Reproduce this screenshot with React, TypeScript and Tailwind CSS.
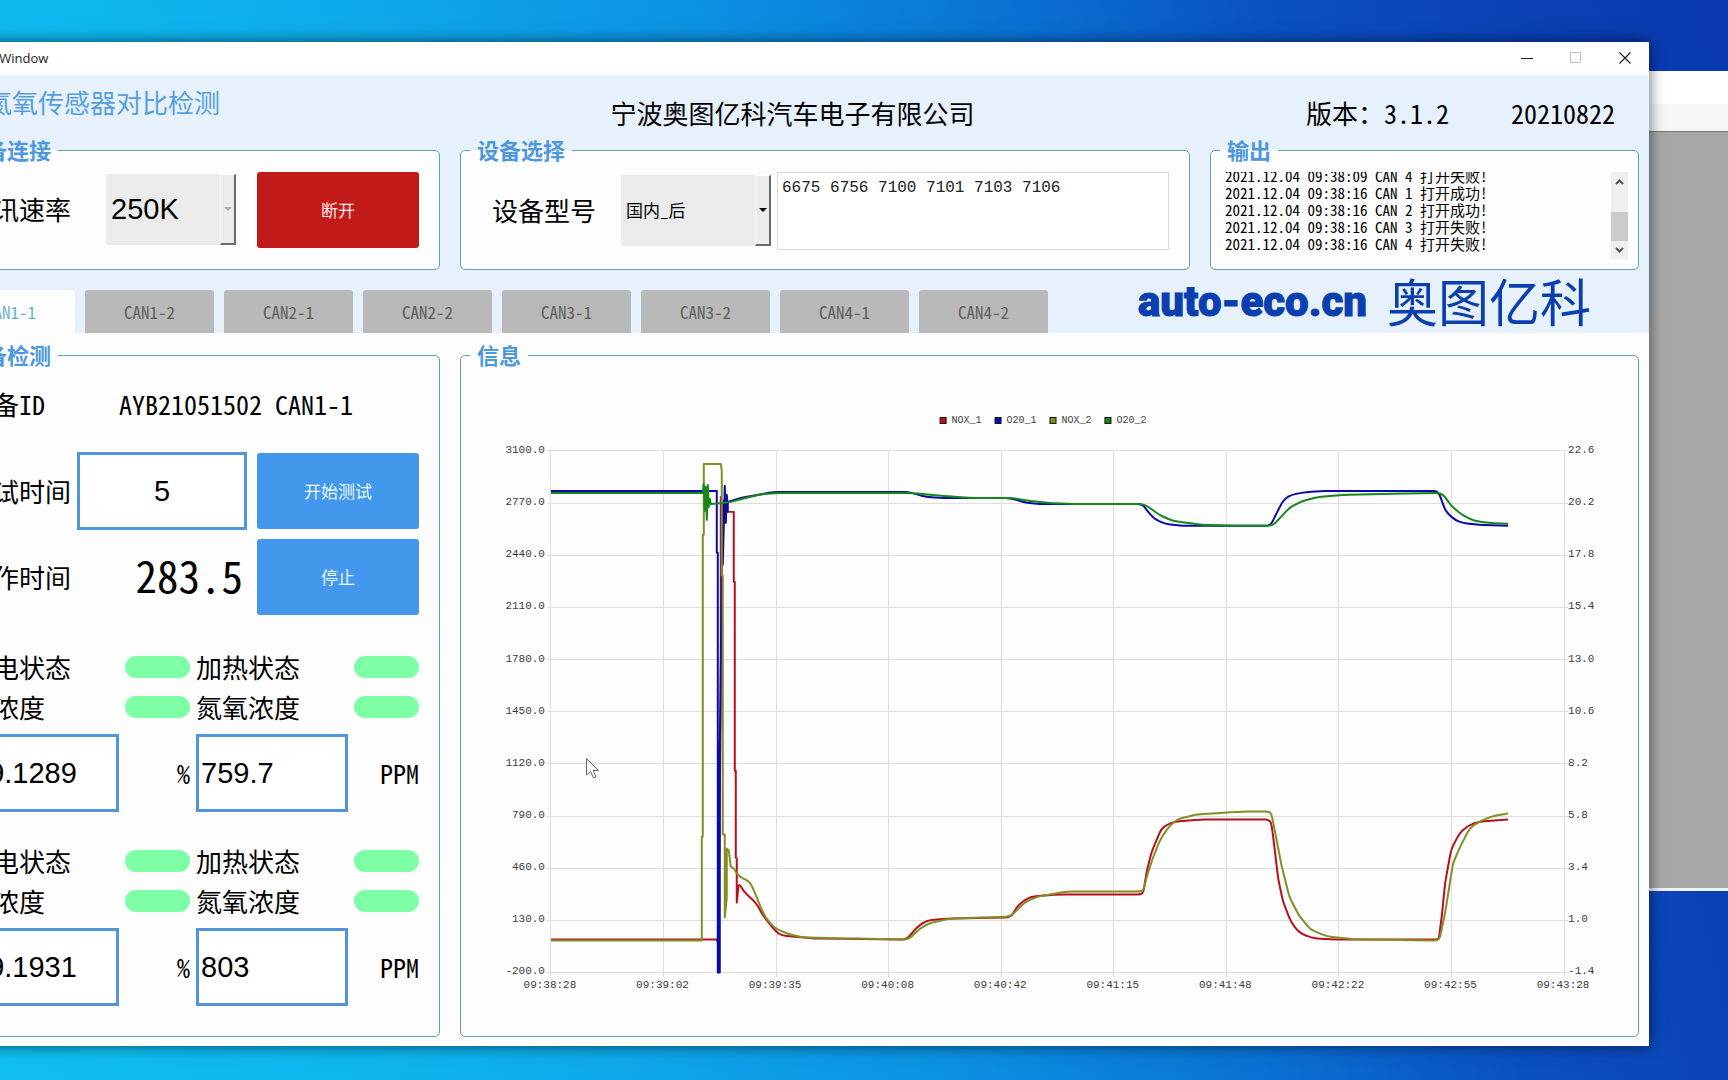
import { useState } from 'react';
import type { ReactNode } from 'react';

type Point = [number, number];

const CAN_TABS = ['CAN1-1', 'CAN1-2', 'CAN2-1', 'CAN2-2', 'CAN3-1', 'CAN3-2', 'CAN4-1', 'CAN4-2'];

const LOG_LINES = [
    '2021.12.04 09:38:09 CAN 4 打开失败!',
    '2021.12.04 09:38:16 CAN 1 打开成功!',
    '2021.12.04 09:38:16 CAN 2 打开成功!',
    '2021.12.04 09:38:16 CAN 3 打开失败!',
    '2021.12.04 09:38:16 CAN 4 打开失败!',
];

const SENSORS = [
    { id: 's1', o2: '19.1289', nox: '759.7' },
    { id: 's2', o2: '19.1931', nox: '803' },
];

// Chart
const PLOT_W = 1014;
const PLOT_H = 522;
const LEFT_AXIS = ['3100.0', '2770.0', '2440.0', '2110.0', '1780.0', '1450.0', '1120.0', '790.0', '460.0', '130.0', '-200.0'];
const RIGHT_AXIS = ['22.6', '20.2', '17.8', '15.4', '13.0', '10.6', '8.2', '5.8', '3.4', '1.0', '-1.4'];
const TIME_AXIS = ['09:38:28', '09:39:02', '09:39:35', '09:40:08', '09:40:42', '09:41:15', '09:41:48', '09:42:22', '09:42:55', '09:43:28'];

const NOX_1: Point[] = [
    [0, 489], [166, 489], [167, 492], [168, 440], [170, 250], [170, 46], [171, 74], [173, 50], [174, 66], [176, 61],
    [183, 61], [183, 131], [184, 131], [184, 320], [185, 320], [185, 407], [186, 408], [186, 452], [188, 432], [193, 441], [205, 452],
    [213, 466], [225, 481], [231, 485], [264, 488], [356, 489], [366, 477], [376, 470], [397, 468], [460, 467],
    [468, 454], [480, 446], [493, 445], [509, 444], [590, 444], [593, 442], [596, 422], [601, 402], [611, 378],
    [617, 374], [624, 371], [650, 369], [720, 369], [722, 379], [728, 429], [733, 452], [741, 472], [748, 481],
    [755, 485], [765, 488], [786, 489], [888, 489], [889, 486], [892, 462], [895, 432], [901, 399], [909, 383],
    [918, 375], [929, 371], [958, 369],
];

const O20_1: Point[] = [
    [0, 40], [166, 40], [166, 102], [167, 102], [167, 522], [169, 522], [169, 300], [171, 125], [171, 52], [173, 60],
    [172, 114], [174, 35], [175, 72], [176, 44], [177, 60], [177, 51], [190, 47], [207, 44], [223, 41], [358, 41],
    [364, 43], [376, 46], [389, 47], [460, 47], [472, 51], [484, 53], [592, 53], [596, 59], [603, 67], [608, 70],
    [615, 73], [632, 75], [720, 75], [724, 67], [732, 51], [736, 47], [741, 44], [756, 41], [780, 40], [888, 40],
    [892, 51], [895, 59], [899, 64], [905, 69], [912, 72], [929, 74], [958, 75],
];

const NOX_2: Point[] = [
    [0, 490], [151, 490], [151, 386], [152, 386], [152, 84], [153, 84], [153, 13], [170, 13], [171, 20], [171, 125],
    [172, 125], [172, 384], [174, 384], [174, 467], [176, 447], [176, 398], [178, 400], [180, 416], [183, 418],
    [188, 426], [199, 431], [204, 442], [213, 464], [223, 477], [236, 483], [252, 487], [301, 488], [358, 489],
    [368, 479], [378, 473], [399, 468], [436, 467], [460, 466], [474, 452], [487, 446], [517, 441], [590, 441],
    [593, 440], [596, 427], [603, 406], [609, 391], [616, 379], [626, 369], [645, 364], [675, 362], [692, 361],
    [720, 361], [722, 367], [731, 414], [739, 446], [748, 464], [760, 479], [777, 486], [807, 489], [888, 490],
    [890, 486], [895, 462], [903, 412], [912, 392], [920, 377], [931, 370], [944, 365], [958, 363],
];

const O20_2: Point[] = [
    [0, 42], [152, 42], [153, 33], [154, 60], [155, 36], [156, 69], [157, 34], [158, 56], [159, 48], [160, 53],
    [172, 52], [180, 51], [192, 48], [207, 44], [225, 42], [358, 42], [372, 43], [393, 45], [419, 47], [460, 47],
    [480, 50], [499, 52], [517, 53], [592, 53], [598, 56], [609, 64], [622, 70], [637, 72], [652, 74], [692, 75],
    [722, 75], [728, 69], [739, 57], [752, 50], [769, 46], [794, 44], [837, 43], [890, 42], [895, 46], [901, 55],
    [912, 64], [924, 70], [939, 72], [958, 73],
];

const SERIES = [
    { name: 'NOX_1', color: '#b80f1f', points: NOX_1 },
    { name: 'O20_1', color: '#0a0aa8', points: O20_1 },
    { name: 'NOX_2', color: '#828f24', points: NOX_2 },
    { name: 'O20_2', color: '#17871b', points: O20_2 },
];

// The start-up spikes stay sharp, corners after them are rounded off
const SPIKES_END = 188;

function toPath(points: Point[]) {
    const toward = ([ax, ay]: Point, [bx, by]: Point) => {
        const len = Math.hypot(bx - ax, by - ay);
        const t = Math.min(0.5, 5 / len);
        return `${(ax + (bx - ax) * t).toFixed(1)} ${(ay + (by - ay) * t).toFixed(1)}`;
    };

    return points
        .map((p, i) => {
            if (i === 0) return `M${p[0]} ${p[1]}`;
            if (p[0] < SPIKES_END || i === points.length - 1) return `L${p[0]} ${p[1]}`;
            return `L${toward(p, points[i - 1])} Q${p[0]} ${p[1]} ${toward(p, points[i + 1])}`;
        })
        .join(' ');
}

function TrendChart() {
    const stepX = PLOT_W / (TIME_AXIS.length - 1);
    const stepY = PLOT_H / (LEFT_AXIS.length - 1);

    return (
        <svg viewBox="0 0 1178 668" className="block w-full font-['Liberation_Mono',monospace] text-[11px]" fill="#3c3c3c">
            {/* Legend */}
            {SERIES.map((s, i) => (
                <g key={s.name} transform={`translate(${479 + i * 55} 50)`}>
                    <rect x="0.5" y="0.5" width="6" height="6" fill={s.color} stroke="#111" />
                    <text x="12" y="6" className="text-[10px]">{s.name}</text>
                </g>
            ))}

            <g transform="translate(90 84)">
                {/* Grid */}
                <g stroke="#dedede" shapeRendering="crispEdges">
                    {LEFT_AXIS.map((label, i) => (
                        <line key={label} x1={-4} x2={PLOT_W + 4} y1={i * stepY} y2={i * stepY} />
                    ))}
                    {TIME_AXIS.map((label, i) => (
                        <line key={label} x1={i * stepX} x2={i * stepX} y1={0} y2={PLOT_H + 5} />
                    ))}
                </g>

                {/* Axis labels */}
                {LEFT_AXIS.map((label, i) => (
                    <text key={label} x={-6} y={i * stepY + 2} textAnchor="end">{label}</text>
                ))}
                {RIGHT_AXIS.map((label, i) => (
                    <text key={label} x={PLOT_W + 4} y={i * stepY + 2}>{label}</text>
                ))}
                {TIME_AXIS.map((label, i) => (
                    <text key={label} x={i * stepX - 1} y={PLOT_H + 16} textAnchor="middle">{label}</text>
                ))}

                {/* Curves */}
                {SERIES.map((s) => (
                    <path key={s.name} d={toPath(s.points)} fill="none" stroke={s.color} strokeWidth="2" strokeLinejoin="round" />
                ))}
            </g>
        </svg>
    );
}

function Panel({ title, className = '', children }: { title: string; className?: string; children: ReactNode }) {
    return (
        <fieldset className={`min-w-0 rounded-[5px] border border-[#5ba3ba] bg-[#fdfdfd] ${className}`}>
            <legend className="ml-[9px] px-[7px] pb-[2px] text-[22px] leading-[22px] font-bold text-[#4d98dd]">{title}</legend>
            {children}
        </fieldset>
    );
}

function ComboBox(props: { id: string; value: string; disabled?: boolean; className: string; arrow: string }) {
    return (
        <div className="relative mb-[2px] h-[71px] bg-[#ebebeb]">
            <select
                id={props.id}
                disabled={props.disabled}
                defaultValue={props.value}
                className={`h-full appearance-none pl-[5px] text-black opacity-100 outline-none ${props.className}`}
            >
                <option>{props.value}</option>
            </select>
            <span className="pointer-events-none absolute inset-y-0 right-0 flex w-4 items-center justify-center border-t border-r-2 border-b-2 border-l border-t-white border-r-[#6b6b6b] border-b-[#6b6b6b] border-l-white bg-[#ececec]">
                <span className={`border-x-4 border-t-4 border-x-transparent ${props.arrow}`} />
            </span>
        </div>
    );
}

function StatusRow({ label }: { label: string }) {
    return (
        <div className="flex h-10 items-center justify-between">
            <span>{label}</span>
            <span className="h-[22px] w-[65px] rounded-full bg-[#7dffa5]" />
        </div>
    );
}

function Reading({ id, name, value, unit }: { id: string; name: string; value: string; unit: string }) {
    return (
        <div className="mt-[7px] flex items-center justify-between">
            <input
                id={id}
                aria-label={name}
                readOnly
                value={value}
                className="h-[78px] w-[152px] border-3 border-[#5096d6] bg-white px-[2px] font-['Liberation_Sans',sans-serif] text-[29px] outline-none"
            />
            <label htmlFor={id}>{unit}</label>
        </div>
    );
}

function TitleBar() {
    return (
        <div className="flex h-[33px] items-center bg-white pb-[2px]">
            <span className="flex-1 pl-[33px] font-['Open_Sans',sans-serif] text-[13px] leading-4 text-[#222]">MainWindow</span>
            <button aria-label="最小化" className="flex h-full w-[49px] items-center justify-center">
                <svg width="12" height="12" stroke="#222"><path d="M0 6.5H12" /></svg>
            </button>
            <button aria-label="最大化" disabled className="flex h-full w-[49px] items-center justify-center">
                <svg width="12" height="12" stroke="#c4c4c4" fill="none"><rect x="0.5" y="0.5" width="10" height="10" /></svg>
            </button>
            <button aria-label="关闭" className="flex h-full w-[49px] items-center justify-center">
                <svg width="12" height="12" stroke="#222" strokeWidth="1.2"><path d="M0.5 0.5L11.5 11.5M11.5 0.5L0.5 11.5" /></svg>
            </button>
        </div>
    );
}

export default function App() {
    const [tab, setTab] = useState('CAN1-1');
    const [testTime, setTestTime] = useState('5');

    return (
        <div className="relative min-h-screen overflow-hidden bg-[linear-gradient(77deg,#10bff2,#0eb6ef_18%,#0da8ea_32%,#0b91e2_48%,#0971d3_64%,#0a50c1_77%,#0a40b4_90%,#0a38b0)] pt-[42px] pb-[34px] font-['Noto_Sans_Mono_CJK_SC','Noto_Sans_CJK_SC',sans-serif] text-[26px] leading-[26px] text-black">
            {/* Window behind */}
            <div className="absolute top-[71px] right-0 flex h-[820px] w-96 flex-col border-b-3 border-[#eef3fb] bg-[#a8a8a8]">
                <div className="h-[33px] bg-white" />
                <div className="h-[28px] border-b border-[#777] bg-[#f6f6f6]" />
            </div>

            {/* Main window, pushed past the left edge of the screen */}
            <div className="relative mr-[79px] -ml-16 bg-[#fdfdfd] shadow-[0_0_14px_rgba(0,0,0,0.6)]">
                <TitleBar />

                <header className="bg-[#e6f1fc]">
                    <div className="grid h-[63px] grid-cols-[1fr_auto_1fr]">
                        <h1 className="pt-[14px] pl-[50px] text-[#559fe0]">氮氧传感器对比检测</h1>
                        <div className="pt-[25px]">宁波奥图亿科汽车电子有限公司</div>
                        <div className="flex justify-end gap-[62px] pt-[25px] pr-[34px]">
                            <span>版本：3.1.2</span>
                            <span>20210822</span>
                        </div>
                    </div>

                    <div className="grid grid-cols-[494px_1fr_429px] gap-5 px-[10px]">
                        <Panel title="设备连接" className="h-[132px]">
                            <div className="flex h-24 items-center px-5">
                                <label htmlFor="baud" className="mr-[35px] pb-[3px]">通讯速率</label>
                                <ComboBox
                                    id="baud"
                                    value="250K"
                                    disabled
                                    className="w-[130px] font-['Liberation_Sans',sans-serif] text-[29px]"
                                    arrow="border-t-[#aaa]"
                                />
                                <button className="ml-auto h-[76px] w-[162px] rounded-[3px] bg-[#c21a19] text-[17px] text-[#ffe9e6]">断开</button>
                            </div>
                        </Panel>

                        <Panel title="设备选择" className="h-[132px]">
                            <div className="flex h-[98px] items-center pr-5 pl-[31px]">
                                <label htmlFor="model" className="mr-[25px] pb-[2px]">设备型号</label>
                                <ComboBox id="model" value="国内_后" className="w-[150px] text-[17px]" arrow="border-t-black" />
                                <textarea
                                    aria-label="型号列表"
                                    readOnly
                                    value="6675 6756 7100 7101 7103 7106"
                                    className="ml-[6px] h-[78px] flex-1 resize-none border border-[#d9d9d9] bg-white px-1 py-[5px] font-['Liberation_Mono',monospace] text-[16px] leading-5 text-[#222] outline-none"
                                />
                            </div>
                        </Panel>

                        <Panel title="输出" className="h-[132px]">
                            <div className="mt-[10px] flex h-[87px] pr-[10px] pl-[14px]">
                                <div role="log" className="flex flex-1 flex-col justify-end overflow-hidden pb-[7px] text-[15px] leading-[17px] font-light">
                                    {LOG_LINES.map((line) => (
                                        <div key={line} className="h-[17px] whitespace-pre">{line}</div>
                                    ))}
                                </div>
                                <div className="flex w-[17px] flex-col items-center bg-[#efefef]">
                                    <button aria-label="向上滚动" className="flex h-5 w-full items-center justify-center">
                                        <svg width="9" height="6" fill="none" stroke="#555" strokeWidth="2"><path d="M1 5L4.5 1.5L8 5" /></svg>
                                    </button>
                                    <div className="mt-5 h-[29px] w-full bg-[#cbcbcb]" />
                                    <button aria-label="向下滚动" className="flex h-[18px] w-full items-center justify-center">
                                        <svg width="9" height="6" fill="none" stroke="#555" strokeWidth="2"><path d="M1 1L4.5 4.5L8 1" /></svg>
                                    </button>
                                </div>
                            </div>
                        </Panel>
                    </div>

                    <div className="flex h-[63px] items-end pl-[10px]">
                        <div role="tablist" className="flex gap-[10px]">
                            {CAN_TABS.map((name) => (
                                <button
                                    key={name}
                                    role="tab"
                                    aria-selected={tab === name}
                                    onClick={() => setTab(name)}
                                    className={`h-[43px] w-[129px] rounded-t-[3px] text-[17px] ${
                                        tab === name ? 'bg-[#fdfdfd] text-[#6db0d6]' : 'bg-[#b9b9b9] text-[#5e5e5e]'
                                    }`}
                                >
                                    {name}
                                </button>
                            ))}
                        </div>
                        <div className="mr-[58px] ml-auto flex h-[63px] items-center gap-5 text-[#0b3fb0]">
                            <span className="font-[Impact,Roboto,sans-serif] text-[42px] font-black [-webkit-text-stroke:1px_#0b3fb0]">auto-eco.cn</span>
                            <span className="pb-1 text-[51px] font-medium">奥图亿科</span>
                        </div>
                    </div>
                </header>

                <main className="grid grid-cols-[494px_1fr] gap-5 px-[10px] pt-[10px] pb-[9px]">
                    <Panel title="设备检测" className="h-[694px]">
                        <div className="px-5">
                            <div className="mb-[11px] flex h-[74px] items-center">
                                <span>设备ID</span>
                                <span className="ml-[74px]">AYB21051502 CAN1-1</span>
                            </div>

                            <div className="flex items-center">
                                <label htmlFor="test-time">测试时间</label>
                                <input
                                    id="test-time"
                                    value={testTime}
                                    onChange={(e) => setTestTime(e.target.value)}
                                    className="ml-[6px] h-[78px] min-w-0 flex-1 border-3 border-[#5096d6] bg-white text-center font-['Liberation_Sans',sans-serif] text-[29px] outline-none"
                                />
                                <button className="ml-[10px] h-[76px] w-[162px] rounded-[3px] bg-[#4398ed] text-[17px] text-[#e6fbff]">开始测试</button>
                            </div>

                            <div className="mt-[9px] flex items-center justify-between">
                                <span>工作时间</span>
                                <span className="mr-[14px] mb-[6px] ml-auto text-[43px] leading-[43px] font-light">283.5</span>
                                <button className="h-[76px] w-[162px] rounded-[3px] bg-[#4398ed] text-[17px] text-[#e6fbff]">停止</button>
                            </div>

                            {/* Sensor readings */}
                            <div className="mt-8 flex flex-col gap-[29px]">
                                {SENSORS.map((sensor) => (
                                    <div key={sensor.id} className="grid grid-cols-2 gap-x-[6px]">
                                        <StatusRow label="供电状态" />
                                        <StatusRow label="加热状态" />
                                        <StatusRow label="氧浓度" />
                                        <StatusRow label="氮氧浓度" />
                                        <Reading id={`${sensor.id}-o2`} name="氧浓度" value={sensor.o2} unit="%" />
                                        <Reading id={`${sensor.id}-nox`} name="氮氧浓度" value={sensor.nox} unit="PPM" />
                                    </div>
                                ))}
                            </div>
                        </div>
                    </Panel>

                    <Panel title="信息">
                        <div className="relative">
                            <TrendChart />
                            {/* Mouse pointer */}
                            <svg className="absolute top-[391px] left-[125px]" width="14" height="21" fill="#fff" stroke="#666" strokeWidth="1">
                                <path d="M0.5 0.5V17L4.5 13.5L7.5 20L10 19L7.2 12.5H12.5Z" />
                            </svg>
                        </div>
                    </Panel>
                </main>
            </div>
        </div>
    );
}
